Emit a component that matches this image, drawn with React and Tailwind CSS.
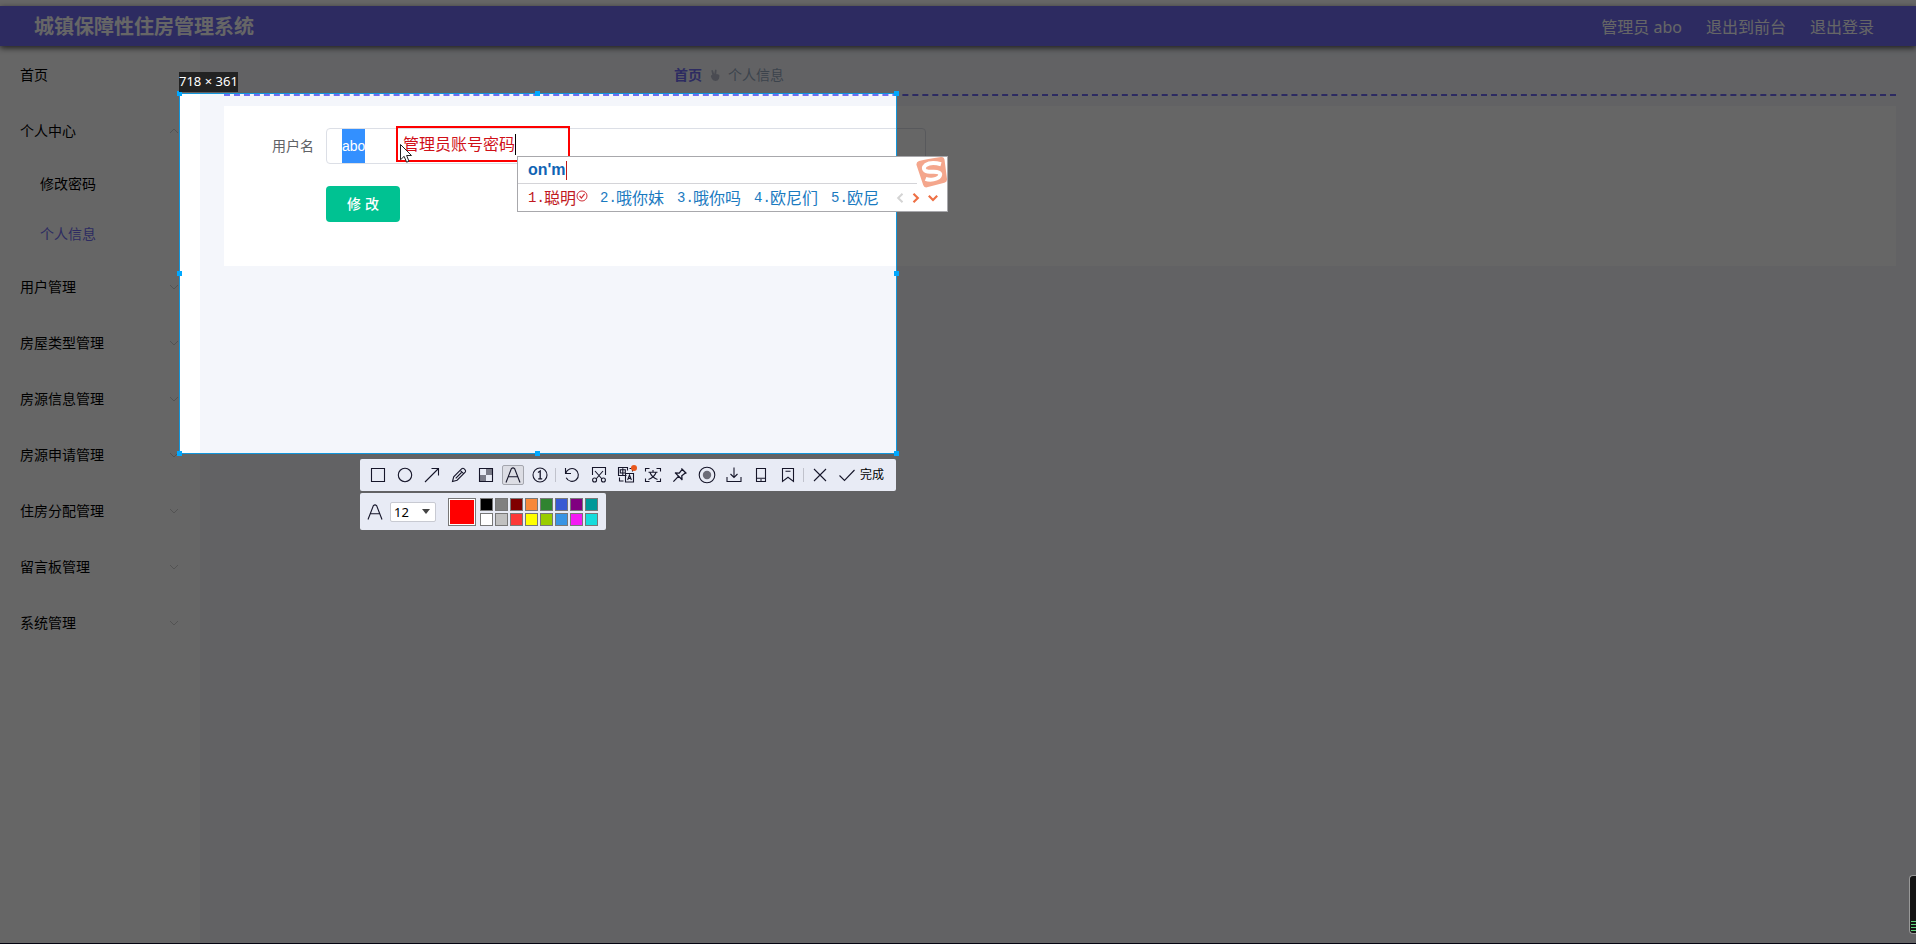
import React, { useEffect, useRef } from 'react';

const SANS = "font-['Noto_Sans','Noto_Sans_CJK_SC',sans-serif]";
const ARIAL = "font-['Liberation_Sans','Noto_Sans_CJK_SC',sans-serif]";

const menu = [
  { title: '首页' },
  {
    title: '个人中心',
    open: true,
    children: [{ title: '修改密码' }, { title: '个人信息', active: true }]
  },
  { title: '用户管理', children: [] },
  { title: '房屋类型管理', children: [] },
  { title: '房源信息管理', children: [] },
  { title: '房源申请管理', children: [] },
  { title: '住房分配管理', children: [] },
  { title: '留言板管理', children: [] },
  { title: '系统管理', children: [] }
];

const candidates = ['聪明', '哦你妹', '哦你吗', '欧尼们', '欧尼'];

const swatches = [
  ['黑', 'bg-black'],
  ['灰', 'bg-[#808080]'],
  ['深红', 'bg-[#800000]'],
  ['橙', 'bg-[#f7883a]'],
  ['绿', 'bg-[#308430]'],
  ['蓝', 'bg-[#385ad3]'],
  ['紫', 'bg-[#800080]'],
  ['青', 'bg-[#009999]'],
  ['白', 'bg-white'],
  ['浅灰', 'bg-[#c0c0c0]'],
  ['红', 'bg-[#fb3838]'],
  ['黄', 'bg-[#ffff00]'],
  ['黄绿', 'bg-[#99cc00]'],
  ['天蓝', 'bg-[#3894e4]'],
  ['品红', 'bg-[#f31bf3]'],
  ['亮青', 'bg-[#16dcdc]']
];

const Icon = ({ children, className = 'h-[18px] w-[18px]' }) => (
  <svg
    viewBox="0 0 18 18"
    className={className}
    fill="none"
    stroke="#16162a"
    strokeWidth="1.1"
    aria-hidden="true"
  >
    {children}
  </svg>
);

const LetterIcon = () => (
  <Icon>
    <path d="M2 16.5 7.4 2.6Q9 1 10.6 2.6L16 16.5M4.5 10.8h9" />
  </Icon>
);

const drawTools = [
  { name: '矩形', icon: <Icon><path d="M2.5 2.5h13v13h-13z" /></Icon> },
  { name: '椭圆', icon: <Icon><circle cx="9" cy="9" r="6.7" /></Icon> },
  { name: '箭头', icon: <Icon><path d="M2 16 15.5 2.5M8.5 2.5h7v7" /></Icon> },
  {
    name: '画笔',
    icon: <Icon><path d="m2.5 15.5 1.2-4.7 8.1-8.1q1.2-.9 2.4.2l.9.9q1 1.2.1 2.3l-8.1 8.1zM10.3 4.3l3.5 3.5M11.5 6.5l-5.8 5.8" /></Icon>
  },
  {
    name: '马赛克',
    icon: (
      <Icon>
        <path d="M9 3h6v6H9zM3 9h6v6H3z" fill="#7a7b88" stroke="none" />
        <path d="M2.5 2.5h13v13h-13z" />
      </Icon>
    )
  },
  { name: '文字', icon: <LetterIcon />, active: true },
  {
    name: '序号',
    icon: <Icon><circle cx="9" cy="9" r="7" /><path d="M7 6.5 9.2 5v8M7.2 12.8h4" strokeWidth="1.3" /></Icon>
  }
];

const actionTools = [
  { name: '撤销', icon: <Icon><path d="M2.5 2v5.5H8M2.8 7.2a6.4 6.4 0 1 1 .4 4.6" /></Icon> },
  {
    name: '长截图',
    icon: (
      <Icon>
        <path d="M2.5 9V1.5h13V9M5 5l7 8M13 5l-7 8" />
        <circle cx="4.6" cy="14" r="2" />
        <circle cx="13.4" cy="14" r="2" />
      </Icon>
    )
  },
  {
    name: '翻译',
    dot: true,
    icon: (
      <Icon>
        <path d="M9.5 9.5h-8v-8h9v3M3.3 3.8h5v3.2h-5zM5.8 2.3v7M8.5 7.5h8v8.5h-8zM10.6 14l1.9-5 1.9 5M11.2 12.4h2.6M2.5 11.5v3.5h4M12.5 2.5h3v3" />
      </Icon>
    )
  },
  {
    name: '文字识别',
    icon: (
      <Icon>
        <path d="M1.5 5.5v-3h4M12.5 2.5h4v3M16.5 12.5v3h-4M5.5 15.5h-4v-3M9 4v2M4.5 6.3h9M12 6.5q-1.8 5-7.5 7M6 6.5q1.8 5 7.5 7" />
      </Icon>
    )
  },
  {
    name: '贴图',
    icon: <Icon><path d="m10.4 2.5 5 5M11.2 3.4 8.2 7.2l-4-.2M14.6 6.8l-3.8 3 .2 4M4 6.6l7.4 7.4M7.4 10.4l-5 5.2" strokeWidth="1.3" /></Icon>
  },
  {
    name: '录屏',
    icon: <Icon><circle cx="9" cy="9" r="7.8" /><circle cx="9" cy="9" r="4.2" fill="#6c6d78" stroke="none" /></Icon>
  },
  { name: '下载', icon: <Icon><path d="M9 1.5v10M5.5 8 9 11.5 12.5 8M2 11v4.5h14V11" /></Icon> },
  { name: '发送到手机', icon: <Icon><path d="M4.5 2.5h9v13h-9zM4.5 12.2h9M8 14h2" /></Icon> },
  { name: '收藏', icon: <Icon><path d="M3.5 15.5v-13h11v13L9 11.3zM6.5 5.3h5" /></Icon> }
];

const ToolButton = ({ tool }) => (
  <button type="button" aria-label={tool.name} className="relative flex h-8 w-[27px] items-center justify-center">
    <span
      className={
        tool.active
          ? 'flex h-5 w-[22px] items-center justify-center rounded-xs border border-[#a4a6ae] bg-[#dcdde4]'
          : 'flex items-center justify-center'
      }
    >
      {tool.icon}
    </span>
    {tool.dot && <span className="absolute top-1.5 right-0.5 h-1.5 w-1.5 rounded-full bg-[#e8571c]" />}
  </button>
);

const Divider = () => <span className="mx-0.5 h-3.5 w-px bg-[#c0c2cc]" />;

const Arrow = ({ open }) => (
  <svg viewBox="0 0 12 12" className="h-3 w-3" fill="none" stroke="#d0d0d0" aria-hidden="true">
    <path d={open ? 'M2 8l4-4 4 4' : 'M2 4l4 4 4-4'} />
  </svg>
);

const Sidebar = () => (
  <nav className="w-[200px] shrink-0 bg-white pt-px text-sm text-black">
    <ul>
      {menu.map((item) => (
        <li key={item.title}>
          <a href="#" className="flex h-14 items-center justify-between px-5">
            {item.title}
            {item.children && <Arrow open={item.open} />}
          </a>
          {item.open && (
            <ul>
              {item.children.map((child) => (
                <li key={child.title}>
                  <a
                    href="#"
                    className={`flex h-[50px] items-center pl-10 ${child.active ? 'text-[#706df2]' : ''}`}
                  >
                    {child.title}
                  </a>
                </li>
              ))}
            </ul>
          )}
        </li>
      ))}
    </ul>
  </nav>
);

const ProfileForm = () => {
  const nameRef = useRef(null);

  useEffect(() => {
    nameRef.current.focus();
    nameRef.current.select();
  }, []);

  return (
    <form className="mt-2.5 h-40 bg-white pt-[22px] pl-12 text-sm" onSubmit={(e) => e.preventDefault()}>
      <div className="flex items-center">
        <label htmlFor="username" className="w-[54px] text-[#606266]">用户名</label>
        <div className="relative w-[600px]">
          {/* full height highlight behind the selected name */}
          <span className="absolute inset-y-px left-4 w-[23px] bg-[#3390ff]" />
          <input
            id="username"
            ref={nameRef}
            defaultValue="abo"
            className={`relative block h-9 w-full rounded border border-[#dcdfe6] bg-transparent px-[15px] text-[#606266] outline-none selection:bg-[#3390ff] selection:text-white ${ARIAL}`}
          />
        </div>
      </div>
      <button
        type="submit"
        className={`mt-[22px] ml-[54px] h-9 rounded bg-[#00c292] px-[21px] font-medium text-white ${ARIAL}`}
      >
        修 改
      </button>
    </form>
  );
};

const Page = () => (
  <>
    <header className="relative z-10 mt-1.5 flex h-10 items-center justify-between bg-[#706df2] pt-0.5 pr-[42px] pl-[34px] text-white shadow-[0_2px_6px_rgba(0,0,0,0.7)]">
      <h1 className="text-xl font-bold">城镇保障性住房管理系统</h1>
      <div className="flex gap-6 text-base">
        <span>管理员 abo</span>
        <a href="#">退出到前台</a>
        <a href="#">退出登录</a>
      </div>
    </header>
    <div className="flex flex-1">
      <Sidebar />
      <main className="flex-1 bg-[#f4f6fb] pr-5 pl-6">
        <div className="flex h-[50px] items-center border-b-2 border-dashed border-[#706df2] pt-2.5 pl-[450px] text-sm">
          <a href="#" className="font-bold text-[#706df2]">首页</a>
          <svg viewBox="0 0 10 12" className="mx-2 h-3 w-2.5" fill="#b8bccc" aria-hidden="true">
            <path d="M1.3 1.5Q2.4.4 3 1.6L4.2 5 5 .9Q6 0 6.6 1L6.3 5.2Q7.6 4.7 8 5.6 9.6 5.5 9.5 7L9 9.8Q8 12 5.4 12 2.6 12 1.7 9.6L.8 7.2Q1 6 2.3 5.8Z" />
          </svg>
          <span className="text-[#97a8be]">个人信息</span>
        </div>
        <ProfileForm />
      </main>
    </div>
    <div className="h-px bg-[#0a0a28]" />
  </>
);

const Handle = ({ className }) => <span className={`absolute h-[5px] w-[5px] bg-[#00a8ff] ${className}`} />;

const Selection = () => (
  <div className="absolute top-[93px] left-[179px] h-[361px] w-[718px] border border-[#1296db] shadow-[0_0_0_3000px_rgba(0,0,0,0.6)]">
    <Handle className="-top-[3px] -left-[3px]" />
    <Handle className="-top-[3px] left-[355px]" />
    <Handle className="-top-[3px] -right-[3px]" />
    <Handle className="top-[177px] -left-[3px]" />
    <Handle className="top-[177px] -right-[3px]" />
    <Handle className="-bottom-[3px] -left-[3px]" />
    <Handle className="-bottom-[3px] left-[355px]" />
    <Handle className="-right-[3px] -bottom-[3px]" />
    <span className="absolute bottom-[361px] -left-px h-5 bg-[#222222] text-[13px] leading-[18px] whitespace-nowrap text-white">
      718 × 361
    </span>
  </div>
);

const Annotation = () => (
  <div className="absolute top-[126px] left-[396px] flex h-9 w-[174px] items-center border-2 border-[#fe0000] pl-[5px]">
    <input
      aria-label="标注文字"
      defaultValue="管理员账号密码"
      className="w-28 bg-transparent text-base text-[#d01018] outline-none"
    />
    <span className="h-[21px] w-px bg-black" />
  </div>
);

const Cursor = () => (
  <svg viewBox="0 0 12 19" className="absolute top-36 left-[400px] h-[19px] w-3" aria-hidden="true">
    <path d="M.5.5v15.3l3.6-3.5 2.5 5.9 2.4-1-2.4-5.7h4.9z" fill="#fff" stroke="#222" />
  </svg>
);

const InputMethod = () => (
  <div className="absolute top-[156px] left-[517px] w-[431px] border border-[#a8a8ac] bg-white">
    <div className="mr-[30px] flex h-[27px] items-center border-b border-[#d4d4d8] pl-2.5">
      <span className={`text-base font-bold text-[#1064b4] ${ARIAL}`}>on'm</span>
      <span className="h-[19px] w-px bg-[#c01818]" />
    </div>
    <div className="flex h-[27px] items-center pl-2.5 text-base text-[#1a7abf]">
      <ol className="flex gap-[13px]">
        {candidates.map((word, i) => (
          <li key={word}>
            <button type="button" className={`flex items-center ${i === 0 ? 'text-[#c01820]' : ''}`}>
              <span className="w-4 text-left font-['Liberation_Mono',monospace] text-sm">{i + 1}.</span>
              {word}
              {i === 0 && (
                <svg viewBox="0 0 12 12" className="-mr-px mb-1 h-3 w-3" fill="none" stroke="#d03038" aria-hidden="true">
                  <circle cx="6" cy="6" r="5" />
                  <path d="m3.6 6 1.8 2 3.2-4.2" strokeWidth="1.2" />
                </svg>
              )}
            </button>
          </li>
        ))}
      </ol>
      <div className="ml-auto flex items-center gap-2 pr-[9px]">
        <button type="button" aria-label="上一页">
          <svg viewBox="0 0 8 10" className="h-2.5 w-2" fill="none" stroke="#d4d4d4" strokeWidth="2" aria-hidden="true">
            <path d="M6.5.8 2.2 5l4.3 4.2" />
          </svg>
        </button>
        <button type="button" aria-label="下一页">
          <svg viewBox="0 0 8 10" className="h-2.5 w-2" fill="none" stroke="#ee7045" strokeWidth="2.2" aria-hidden="true">
            <path d="M1.5.8 5.8 5 1.5 9.2" />
          </svg>
        </button>
        <button type="button" aria-label="展开">
          <svg viewBox="0 0 10 8" className="h-2 w-2.5" fill="none" stroke="#ee7045" strokeWidth="2.2" aria-hidden="true">
            <path d="M.8 1.8 5 6l4.2-4.2" />
          </svg>
        </button>
      </div>
    </div>
    <svg viewBox="0 0 31 31" className="absolute top-0 right-0 h-[31px] w-[31px]" aria-hidden="true">
      <path d="M3 4Q11 2 25 0q3-.3 3.5 2.5L31 22q.2 3-2.6 3.8L11 30.3q-3 .5-3.8-2.2L.5 8Q0 4.8 3 4z" fill="#f4a68c" />
      <path
        d="M25 7.2Q15 4.5 9.8 8q-3.6 3.2-.6 5.6 2.2 1.4 8.6 1.2 6.6 0 6.4 2.8-.4 3.6-6.6 4.8-4.6.8-8-.6"
        fill="none"
        stroke="#fff"
        strokeWidth="4"
      />
    </svg>
  </div>
);

const CaptureToolbar = () => (
  <div className="absolute top-[459px] left-[360px]">
    <div className="flex h-8 w-[536px] items-center rounded-xs bg-[#e8ebf5] pl-1">
      {drawTools.map((tool) => <ToolButton key={tool.name} tool={tool} />)}
      <Divider />
      {actionTools.map((tool) => <ToolButton key={tool.name} tool={tool} />)}
      <Divider />
      <ToolButton tool={{ name: '关闭', icon: <Icon><path d="m3 3 12 12M15 3 3 15" /></Icon> }} />
      <button type="button" className="ml-[5px] flex items-center gap-1 text-xs text-black">
        <Icon><path d="m1.5 9.5 5 5L16.5 4" /></Icon>
        完成
      </button>
    </div>
    <div className="mt-0.5 flex h-[37px] w-[246px] items-center rounded-xs bg-[#e8ebf5] pl-1.5">
      <LetterIcon />
      <div className="relative ml-1.5 h-5 w-[46px]">
        <select
          aria-label="字号"
          className="block h-5 w-full appearance-none rounded-xs border border-[#c8cad2] bg-white pl-[3px] text-[13px] leading-[18px] text-black"
        >
          <option>12</option>
        </select>
        <svg viewBox="0 0 8 5" className="pointer-events-none absolute top-[7px] right-1.5 h-[5px] w-2" fill="#444" aria-hidden="true">
          <path d="M0 0h8L4 5z" />
        </svg>
      </div>
      <button type="button" aria-label="当前颜色" className="ml-3 h-7 w-7 border border-[#777] bg-white p-px">
        <span className="block h-full bg-[#ff0000]" />
      </button>
      <div className="ml-1 grid grid-cols-8 gap-0.5">
        {swatches.map(([name, color]) => (
          <button key={name} type="button" aria-label={name} className={`h-[13px] w-[13px] border border-[#777] ${color}`} />
        ))}
      </div>
    </div>
  </div>
);

// volume meter that peeks out of the window's right edge
const Meter = () => (
  <div className="absolute right-0 bottom-[10px] flex h-[59px] w-[7px] flex-col justify-end gap-0.5 rounded-l border border-r-0 border-[#999] bg-[#141414] pb-0.5 pl-px">
    {[0, 1, 2, 3].map((i) => <span key={i} className="h-px bg-[#5fd07a]" />)}
  </div>
);

const App = () => (
  <div className={`relative flex min-h-screen flex-col overflow-hidden bg-white ${SANS}`}>
    <Page />
    <div className="absolute inset-0 z-20 overflow-hidden">
      <Selection />
      <Annotation />
      <Cursor />
      <InputMethod />
      <CaptureToolbar />
      <Meter />
    </div>
  </div>
);

export default App;
